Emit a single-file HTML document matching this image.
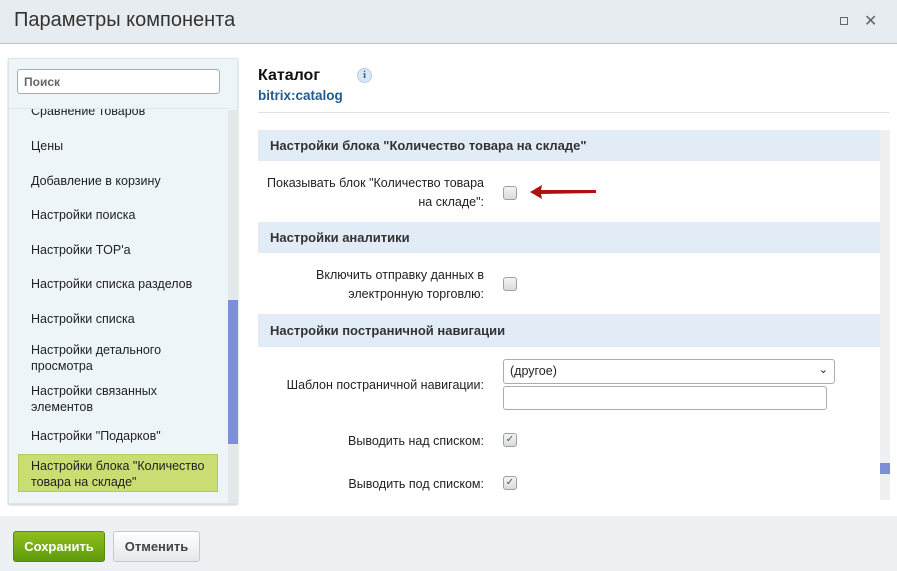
<!DOCTYPE html>
<html><head><meta charset="utf-8"><style>
*{box-sizing:border-box;margin:0;padding:0}
body{width:897px;height:571px;position:relative;background:#fff;font-family:"Liberation Sans",sans-serif;font-size:12.5px;color:#222;overflow:hidden}
.abs{position:absolute}
.hdr{left:0;top:0;width:897px;height:44px;background:#e6ecef;border-bottom:1px solid #b9c3c8}
.hdr .t{left:14px;top:9px;font-size:20px;color:#333}
.ftr{left:0;top:516px;width:897px;height:55px;background:#edf1f3}
.lp{left:8px;top:58px;width:230px;height:446px;background:#eef5f8;border:1px solid #dde4e8;box-shadow:0 1px 2px #ccc}
.search{left:17px;top:69px;width:203px;height:25px;border:1px solid #a6aeb3;border-radius:3px;background:#fff;font-weight:bold;color:#666;font-size:12px;padding:5px 6px}
.li{left:31px;font-size:12.5px;color:#222;line-height:16px}
.sec{left:258px;width:622px;background:#e1ecf7;font-weight:bold;font-size:13px;color:#333;padding-left:12px}
.lab{right:413px;text-align:right;line-height:19px;font-size:12.5px;color:#222}
.cb{width:14px;height:14px;border:1px solid #9aa2a8;border-radius:3px;background:linear-gradient(#f4f4f4,#d8dadc)}
.btn{top:531px;height:31px;border-radius:3px;font-weight:bold;font-size:13px;text-align:center;line-height:30px}
</style></head><body>
<div class="abs hdr"><div class="abs t">Параметры компонента</div>
<div class="abs" style="left:840px;top:17px;width:8px;height:8px;border:1px solid #666"></div>
<div class="abs" style="left:864px;top:11px;font-size:16px;color:#666">✕</div></div>

<div class="abs lp"></div>
<div class="abs search">Поиск</div>
<div class="abs" style="left:9px;top:108px;width:219px;height:1px;background:#dfe6ea"></div>
<div class="abs" style="left:9px;top:109px;width:219px;height:12px;overflow:hidden"><div style="position:absolute;left:22px;top:-5px;font-size:12.5px">Сравнение товаров</div></div>
<div class="abs" style="left:228px;top:110px;width:10px;height:393px;background:#e3e8eb"></div>
<div class="abs" style="left:228px;top:300px;width:10px;height:144px;background:#7d8fd9"></div>
<div class="abs li" style="top:138px">Цены</div>
<div class="abs li" style="top:173px">Добавление в корзину</div>
<div class="abs li" style="top:207px">Настройки поиска</div>
<div class="abs li" style="top:242px">Настройки TOP'а</div>
<div class="abs li" style="top:276px">Настройки списка разделов</div>
<div class="abs li" style="top:311px">Настройки списка</div>
<div class="abs li" style="top:342px">Настройки детального<br>просмотра</div>
<div class="abs li" style="top:383px">Настройки связанных<br>элементов</div>
<div class="abs li" style="top:428px">Настройки "Подарков"</div>
<div class="abs" style="left:18px;top:454px;width:200px;height:38px;background:#c9dd72;border:1px solid #b5c95f"></div>
<div class="abs li" style="top:458px">Настройки блока "Количество<br>товара на складе"</div>

<div class="abs" style="left:258px;top:67px;font-size:16px;font-weight:bold;color:#111">Каталог</div>
<div class="abs" style="left:357px;top:68px;width:15px;height:15px;border-radius:50%;background:#dbe7f3;border:1px solid #b8cde2;color:#2a6bb0;font:bold 11px 'Liberation Serif',serif;text-align:center;line-height:13px">i</div>
<div class="abs" style="left:258px;top:88px;font-size:13.5px;font-weight:bold;color:#245b8f">bitrix:catalog</div>
<div class="abs" style="left:258px;top:112px;width:632px;height:1px;background:#dde3e7"></div>

<div class="abs" style="left:880px;top:130px;width:10px;height:370px;background:#eef0f2"></div>
<div class="abs" style="left:880px;top:463px;width:10px;height:11px;background:#7d8fd9"></div>

<div class="abs sec" style="top:130px;height:31px;line-height:31px">Настройки блока "Количество товара на складе"</div>
<div class="abs lab" style="top:174px">Показывать блок "Количество товара<br>на складе":</div>
<div class="abs cb" style="left:503px;top:186px"></div>
<svg class="abs" style="left:526px;top:183px" width="72" height="18"><path d="M4 9 L16 2 L15 7 L70 7 L70 10 L15 11 L16 16 Z" fill="#b0100f"/></svg>

<div class="abs sec" style="top:222px;height:31px;line-height:31px">Настройки аналитики</div>
<div class="abs lab" style="top:266px">Включить отправку данных в<br>электронную торговлю:</div>
<div class="abs cb" style="left:503px;top:277px"></div>

<div class="abs sec" style="top:314px;height:33px;line-height:33px">Настройки постраничной навигации</div>
<div class="abs lab" style="top:376px">Шаблон постраничной навигации:</div>
<div class="abs" style="left:503px;top:359px;width:332px;height:25px;border:1px solid #a6aeb3;border-radius:3px;background:#fff;padding:4px 6px;font-size:12.5px">(другое)<span style="position:absolute;right:6px;top:3px;font-size:11px">⌄</span></div>
<div class="abs" style="left:503px;top:386px;width:324px;height:24px;border:1px solid #a6aeb3;border-radius:3px;background:#fff"></div>
<div class="abs lab" style="top:432px">Выводить над списком:</div>
<div class="abs cb" style="left:503px;top:433px;font-size:10px;line-height:12px;text-align:center;color:#555">✓</div>
<div class="abs lab" style="top:475px">Выводить под списком:</div>
<div class="abs cb" style="left:503px;top:476px;font-size:10px;line-height:12px;text-align:center;color:#555">✓</div>

<div class="abs ftr"></div>
<div class="abs btn" style="left:13px;width:92px;background:linear-gradient(#8fbf1d,#5f9a0b);color:#fff;border:1px solid #5a8a10">Сохранить</div>
<div class="abs btn" style="left:113px;width:87px;background:linear-gradient(#fff,#e4e8ea);color:#444;border:1px solid #c3cacf">Отменить</div>
</body></html>
